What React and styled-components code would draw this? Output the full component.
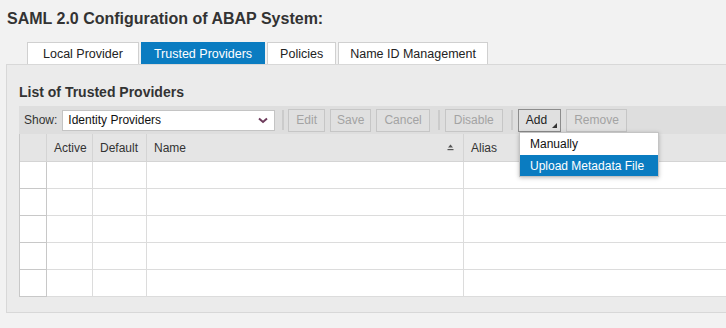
import styled, { createGlobalStyle } from "styled-components";

const GlobalStyle = createGlobalStyle`
  html, body {
    margin: 0;
    padding: 0;
    background: #f2f2f2;
    overflow: hidden;
  }
  body {
    font-family: "Liberation Sans", Arial, sans-serif;
    color: #333;
  }
`;

const Page = styled.div`
  width: 760px;
  height: 328px;
  padding-top: 8px;
  box-sizing: border-box;
`;

const Title = styled.h1`
  margin: 0 0 0 7px;
  height: 21px;
  line-height: 21px;
  font-size: 16px;
  font-weight: bold;
  color: #333;
`;

const Tabs = styled.div`
  display: flex;
  gap: 2px;
  margin: 13px 0 0 27px;
  height: 22px;
  position: relative;
  z-index: 1;
`;

const Tab = styled.div`
  height: 22px;
  box-sizing: border-box;
  padding: 0 ${(p) => p.$pad}px;
  display: flex;
  align-items: center;
  font-size: 12.5px;
  color: ${(p) => (p.$active ? "#fff" : "#222")};
  background: ${(p) => (p.$active ? "#0a7cc1" : "#fff")};
  border: 1px solid ${(p) => (p.$active ? "#0a7cc1" : "#d0d0d0")};
  border-bottom: none;
`;

const Panel = styled.div`
  margin-left: 6px;
  height: 249px;
  box-sizing: border-box;
  background: #ebebeb;
  border: 1px solid #d8d8d8;
  border-right: none;
  padding: 19px 0 0 12px;
`;

const Heading = styled.h2`
  margin: 0;
  height: 22px;
  line-height: 17px;
  font-size: 14px;
  font-weight: bold;
  color: #333;
`;

const Toolbar = styled.div`
  height: 28px;
  background: #dedede;
  display: flex;
  align-items: center;
  padding-left: 5px;
  position: relative;
`;

const Label = styled.span`
  font-size: 12px;
  color: #333;
  margin-right: 5px;
`;

const Select = styled.div`
  width: 213px;
  height: 21px;
  box-sizing: border-box;
  background: #fff;
  border: 1px solid #c4c4c4;
  display: flex;
  align-items: center;
  justify-content: space-between;
  padding: 0 6px 0 5px;
  font-size: 12px;
  color: #111;
`;

const Sep = styled.div`
  width: 2px;
  height: 20px;
  background: #cbcbcb;
  margin: 0 ${(p) => p.$right}px 0 ${(p) => p.$left}px;
`;

const Button = styled.div`
  height: 23px;
  box-sizing: border-box;
  padding: 0 ${(p) => p.$pad}px;
  display: flex;
  align-items: center;
  font-size: 12px;
  color: ${(p) => (p.$enabled ? "#222" : "#a3a3a3")};
  border: 1px solid ${(p) => (p.$enabled ? "#8c8c8c" : "#c6c6c6")};
  background: #e0e0e0;
  margin-right: 5px;
  position: relative;
`;

const Corner = styled.span`
  position: absolute;
  right: 3px;
  bottom: 3px;
  width: 0;
  height: 0;
  border-left: 5px solid transparent;
  border-bottom: 5px solid #333;
`;

const Table = styled.div`
  display: grid;
  grid-template-columns: 27px 46px 54px 317px 1fr;
  background: #fff;
  border-left: 1px solid #c8c8c8;
`;

const HeadCell = styled.div`
  height: 28px;
  box-sizing: border-box;
  background: #e5e5e5;
  border-right: 1px solid #d4d4d4;
  border-bottom: 1px solid #d4d4d4;
  display: flex;
  align-items: center;
  justify-content: space-between;
  padding: 0 9px 0 7px;
  font-size: 12px;
  color: #333;
`;

const Cell = styled.div`
  height: 27px;
  box-sizing: border-box;
  border-right: 1px solid ${(p) => (p.$first ? "#c8c8c8" : "#dcdcdc")};
  border-bottom: 1px solid ${(p) => (p.$first ? "#c8c8c8" : "#dcdcdc")};
`;

const Menu = styled.div`
  position: absolute;
  left: 500px;
  top: 26px;
  width: 138px;
  background: #fff;
  border: 1px solid #c4c4c4;
  box-shadow: 0 1px 4px rgba(0, 0, 0, 0.25);
  z-index: 5;
`;

const MenuItem = styled.div`
  height: ${(p) => p.$h}px;
  display: flex;
  align-items: center;
  padding-left: 10px;
  font-size: 12px;
  color: ${(p) => (p.$selected ? "#fff" : "#111")};
  background: ${(p) => (p.$selected ? "#0a7cc1" : "#fff")};
`;

const Chevron = () => (
  <svg width="10" height="7" viewBox="0 0 10 7">
    <path d="M1 1.5 L5 5 L9 1.5" fill="none" stroke="#6e3b5c" strokeWidth="2" />
  </svg>
);

const SortIcon = () => (
  <svg width="7" height="7" viewBox="0 0 7 7">
    <path d="M3.5 0.5 L6 3.5 L1 3.5 Z" fill="#555" />
    <rect x="0.5" y="5" width="6" height="1.2" fill="#555" />
  </svg>
);

const columns = ["", "Active", "Default", "Name", "Alias"];
const rows = [0, 1, 2, 3, 4];

export default function App() {
  return (
    <Page>
      <GlobalStyle />
      <Title>SAML 2.0 Configuration of ABAP System:</Title>
      <Tabs>
        <Tab $pad={15}>Local Provider</Tab>
        <Tab $pad={12} $active>Trusted Providers</Tab>
        <Tab $pad={12}>Policies</Tab>
        <Tab $pad={11}>Name ID Management</Tab>
      </Tabs>
      <Panel>
        <Heading>List of Trusted Providers</Heading>
        <Toolbar>
          <Label>Show:</Label>
          <Select>
            <span>Identity Providers</span>
            <Chevron />
          </Select>
          <Sep $left={7} $right={4} />
          <Button $pad={7}>Edit</Button>
          <Button $pad={6}>Save</Button>
          <Button $pad={7}>Cancel</Button>
          <Sep $left={3} $right={5} />
          <Button $pad={8}>Disable</Button>
          <Sep $left={3} $right={5} />
          <Button $pad={7} $enabled>
            Add
            <span style={{ width: 6 }} />
            <Corner />
          </Button>
          <Button $pad={7}>Remove</Button>
          <Menu>
            <MenuItem $h={22}>Manually</MenuItem>
            <MenuItem $h={21} $selected>Upload Metadata File</MenuItem>
          </Menu>
        </Toolbar>
        <Table>
          {columns.map((c, i) => (
            <HeadCell key={i}>
              <span>{c}</span>
              {c === "Name" && <SortIcon />}
            </HeadCell>
          ))}
          {rows.map((r) =>
            columns.map((c, i) => <Cell key={`${r}-${i}`} $first={i === 0} />)
          )}
        </Table>
      </Panel>
    </Page>
  );
}
